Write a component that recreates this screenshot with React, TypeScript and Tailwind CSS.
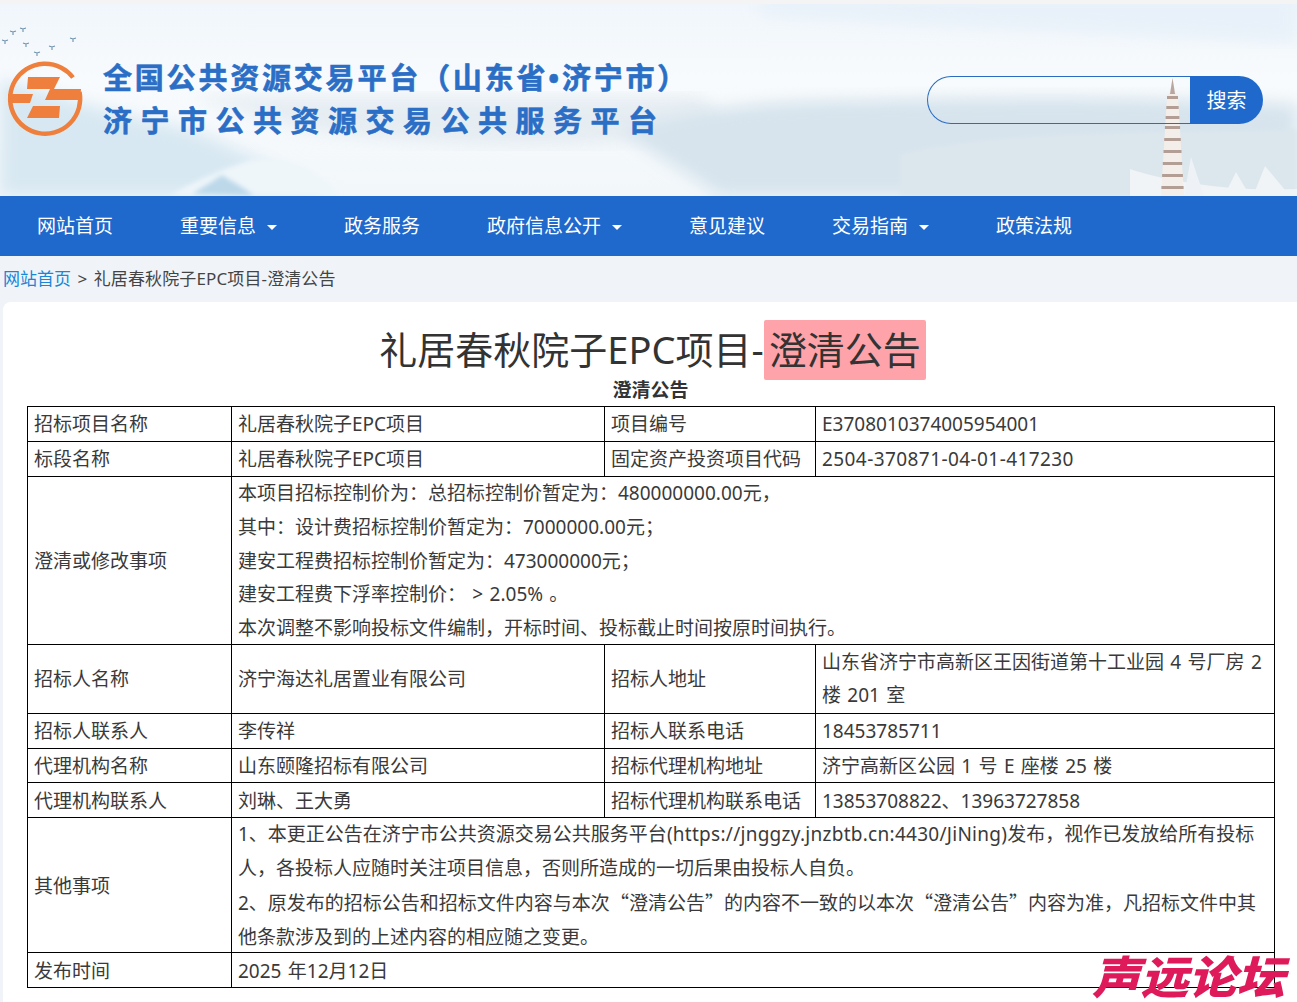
const navItems = [
  { label: "网站首页" },
  { label: "重要信息", caret: true },
  { label: "政务服务" },
  { label: "政府信息公开", caret: true },
  { label: "意见建议" },
  { label: "交易指南", caret: true },
  { label: "政策法规" },
];

const birds = [
  [5, 36],
  [13, 27],
  [23, 24],
  [26, 39],
  [37, 48],
  [52, 42],
  [73, 34],
];

const tiers = [92, 102, 112, 122, 134, 146, 158, 170, 182];

const HeaderArt = () => (
  <svg className="absolute inset-0 h-full w-full" viewBox="0 0 1297 192" preserveAspectRatio="none">
    <defs>
      <linearGradient id="sky" x1="0" y1="0" x2="0" y2="1">
        <stop offset="0" stopColor="#f0f6fb" />
        <stop offset="0.4" stopColor="#f8fbfd" />
        <stop offset="1" stopColor="#f2f7fa" />
      </linearGradient>
      <filter id="soft"><feGaussianBlur stdDeviation="8" /></filter>
      <filter id="soft2"><feGaussianBlur stdDeviation="2.5" /></filter>
      <filter id="soft3"><feGaussianBlur stdDeviation="0.6" /></filter>
    </defs>
    <rect width="1297" height="192" fill="url(#sky)" />
    <path d="M760 -10 H1297 V40 C1150 30 950 25 760 10Z" fill="#e8f1f9" filter="url(#soft)" />
    <path d="M0 75 C40 85 110 110 190 125 C250 150 310 180 330 192 H0Z" fill="#d8e8f2" filter="url(#soft)" />
    <path d="M190 92 H700 L730 125 C600 150 420 145 300 125Z" fill="#e2eaf0" opacity="0.8" filter="url(#soft)" />
    <path d="M620 125 C720 100 780 96 860 96 C1000 92 1150 92 1297 100 V192 H720 C690 170 650 150 620 125Z" fill="#d7e4ed" filter="url(#soft)" />
    <path d="M900 150 C1000 125 1130 130 1297 125 V192 H900Z" fill="#dce6ed" filter="url(#soft2)" />
    <path d="M170 192 C205 172 225 165 245 158 C265 152 285 155 300 160 C320 170 330 182 345 192Z" fill="#eff6fa" filter="url(#soft2)" />
    <path d="M192 190 C205 182 215 176 222 171 C232 178 244 183 254 192Z" fill="#bcd8e9" filter="url(#soft2)" />
    {/* birds */}
    <g stroke="#6d92ad" strokeWidth="1.1" fill="none">
      {birds.map(([x, y]) => (
        <path key={x} d={`M${x - 3} ${y}l3 1 3-1M${x} ${y + 1}v3`} />
      ))}
    </g>
    {/* bridge */}
    <g filter="url(#soft3)">
      <path d="M1130 165 C1160 175 1220 188 1297 185 V192 H1130Z" fill="#f0f4f7" />
      <path d="M1184 192 L1191 153 L1204 192Z" fill="#eef2f7" />
      <path d="M1224 192 L1236 168 L1250 192Z" fill="#f0f4f7" />
      <path d="M1253 192 L1265 162 L1290 192Z" fill="#f0f4f7" />
    </g>
    {/* pagoda */}
    <g filter="url(#soft3)">
      <path d="M1172.5 74 L1175 88 L1178 92 L1184 192 H1161 L1167 92 L1170 88Z" fill="#f3eeea" />
      <path d="M1172.5 74 L1175 90 H1170Z" fill="#b9a79f" />
      {tiers.map((y, i) => (
        <rect key={y} x={1167 - i * 0.7} y={y} width={11 + i * 1.4} height={3} fill="#b39e95" />
      ))}
    </g>
  </svg>
);

const Logo = () => (
  <svg className="absolute left-0 top-[16px]" width="110" height="125" viewBox="0 20 110 125">
    <path d="M73 77.5A35 35 0 1 0 79.5 92" fill="none" stroke="#ee7f3c" strokeWidth="4.5" />
    <path d="M28 77H60L54 89H27Z" fill="#ee7f3c" />
    <path d="M8 94H33L30 103H10Z" fill="#ee7f3c" />
    <path d="M50 89H81L80 100H45Z" fill="#ee7f3c" />
    <path d="M33 106H60L59 118H27Z" fill="#ee7f3c" />
  </svg>
);

const Watermark = () => (
  <div className="absolute left-[1092px] top-[953px] origin-left scale-x-[1.07] text-[45px] leading-[48px] font-black italic text-[#de1a5a] whitespace-nowrap">
    声远论坛
  </div>
);

const border = "border border-black px-[6px] align-middle";
const td = `${border} pt-[2px] leading-[31.4px]`;
const tdBlock = `${border} leading-[33.75px]`;
const cjkQuote = "font-['Noto_Sans_CJK_SC',sans-serif]";

export default function App() {
  return (
    <div className="relative h-[1002px] overflow-hidden bg-[#f0f4f9] font-['Noto_Sans','Noto_Sans_CJK_SC',sans-serif] text-[19px] leading-[33.6px] text-[#3a3a3a]">
      <div className="h-[4px] bg-[#f4f4f4]" />
      <header className="relative h-[192px]">
        <HeaderArt />
        <Logo />
        <div className="absolute left-[103px] top-[55px] text-[29px] leading-[38px] font-bold text-[#2a6ec6] [-webkit-text-stroke:0.6px_#2a6ec6]">
          <div className="tracking-[2.8px] whitespace-nowrap">全国公共资源交易平台（山东省•济宁市）</div>
          <div className="mt-[5px] tracking-[8.5px] whitespace-nowrap">济宁市公共资源交易公共服务平台</div>
        </div>
        <div className="absolute left-[927px] top-[72px] flex h-[48px] w-[336px]">
          <input className="h-full w-[263px] rounded-l-full border border-r-0 border-[#2a6cc0] bg-transparent outline-none" />
          <button className="h-full w-[73px] rounded-r-full bg-[#1f69cd] pt-[1px] text-[20px] text-white">搜索</button>
        </div>
      </header>

      <nav className="flex h-[60px] items-center gap-[67px] bg-[#1f69cd] pl-[37px] pt-[2px] text-white">
        {navItems.map((item) => (
          <div key={item.label} className="flex items-center">
            <span>{item.label}</span>
            {item.caret && <span className="ml-[11px] h-0 w-0 border-x-[5px] border-t-[5px] border-x-transparent border-t-white" />}
          </div>
        ))}
      </nav>

      <div className="flex h-[46px] items-center pb-[1px] pl-[3px] text-[17px] text-[#444]">
        <span className="text-[#1a86d6]">网站首页</span>
        <span className="mx-[6.5px]">&gt;</span>
        <span className="tracking-[0.12px]">礼居春秋院子EPC项目-澄清公告</span>
      </div>

      <main className="ml-[3px] h-[700px] rounded-tl-lg bg-white pl-[24px] pt-[18px]">
        <h1 className="flex h-[60px] items-start justify-center pr-[19px] text-[38px] font-normal leading-[58px] text-[#333]">
          <span>礼居春秋院子EPC项目-</span>
          <span className="h-[60px] rounded-[2px] bg-[#ffa3aa] px-[5px]">澄清公告</span>
        </h1>
        <div className="flex h-[26px] items-center justify-center pb-[4px] pr-[23px] font-bold text-[#333]">澄清公告</div>

        <table className="w-[1247px] table-fixed border-collapse [word-spacing:1.4px]">
          <colgroup>
            <col className="w-[204px]" />
            <col className="w-[373px]" />
            <col className="w-[211px]" />
            <col className="w-[459px]" />
          </colgroup>
          <tbody>
            <tr className="h-[35px]">
              <td className={td}>招标项目名称</td>
              <td className={td}>礼居春秋院子EPC项目</td>
              <td className={td}>项目编号</td>
              <td className={td}>E3708010374005954001</td>
            </tr>
            <tr className="h-[35px]">
              <td className={td}>标段名称</td>
              <td className={td}>礼居春秋院子EPC项目</td>
              <td className={td}>固定资产投资项目代码</td>
              <td className={`${td} tracking-[0.42px]`}>2504-370871-04-01-417230</td>
            </tr>
            <tr className="h-[168px]">
              <td className={td}>澄清或修改事项</td>
              <td className={tdBlock} colSpan={3}>
                <div className="h-[167px]">
                  <div>本项目招标控制价为：总招标控制价暂定为：480000000.00元，</div>
                  <div>其中：设计费招标控制价暂定为：7000000.00元；</div>
                  <div>建安工程费招标控制价暂定为：473000000元；</div>
                  <div>建安工程费下浮率控制价： &gt; 2.05% 。</div>
                  <div>本次调整不影响投标文件编制，开标时间、投标截止时间按原时间执行。</div>
                </div>
              </td>
            </tr>
            <tr className="h-[69px]">
              <td className={td}>招标人名称</td>
              <td className={td}>济宁海达礼居置业有限公司</td>
              <td className={td}>招标人地址</td>
              <td className={tdBlock}>
                <div className="h-[67px]">山东省济宁市高新区王因街道第十工业园 4 号厂房 2 楼 201 室</div>
              </td>
            </tr>
            <tr className="h-[35px]">
              <td className={td}>招标人联系人</td>
              <td className={td}>李传祥</td>
              <td className={td}>招标人联系电话</td>
              <td className={td}>18453785711</td>
            </tr>
            <tr className="h-[34px]">
              <td className={td}>代理机构名称</td>
              <td className={td}>山东颐隆招标有限公司</td>
              <td className={td}>招标代理机构地址</td>
              <td className={td}>济宁高新区公园 1 号 E 座楼 25 楼</td>
            </tr>
            <tr className="h-[35px]">
              <td className={td}>代理机构联系人</td>
              <td className={td}>刘琳、王大勇</td>
              <td className={td}>招标代理机构联系电话</td>
              <td className={td}>13853708822、13963727858</td>
            </tr>
            <tr className="h-[135px]">
              <td className={td}>其他事项</td>
              <td className={tdBlock} colSpan={3}>
                <div className="h-[67px]">
                  1、本更正公告在济宁市公共资源交易公共服务平台
                  <span className="tracking-[0.27px]">(https://jnggzy.jnzbtb.cn:4430/JiNing)</span>
                  发布，视作已发放给所有投标人，各投标人应随时关注项目信息，否则所造成的一切后果由投标人自负。
                </div>
                <div className="h-[67px]">
                  2、原发布的招标公告和招标文件内容与本次<span className={cjkQuote}>“澄清公告”</span>的内容不一致的以本次<span className={cjkQuote}>“澄清公告”</span>内容为准，凡招标文件中其他条款涉及到的上述内容的相应随之变更。
                </div>
              </td>
            </tr>
            <tr className="h-[35px]">
              <td className={td}>发布时间</td>
              <td className={td} colSpan={3}>2025 年12月12日</td>
            </tr>
          </tbody>
        </table>
      </main>
      <Watermark />
    </div>
  );
}
